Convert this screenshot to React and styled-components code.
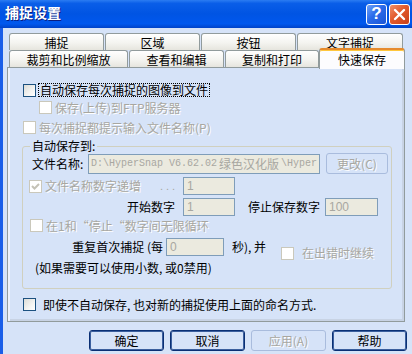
import React from 'react';
import styled, { createGlobalStyle } from 'styled-components';

const GlobalStyle = createGlobalStyle`
  html, body { margin: 0; padding: 0; background: #D6E3F8; }
  body {
    font-family: "Noto Sans CJK SC", "Liberation Sans", sans-serif;
    font-size: 12px;
    color: #000;
  }
`;

const Window = styled.div`
  width: 412px;
  height: 354px;
  overflow: hidden;
  display: flex;
  flex-direction: column;
  background: #D6E3F8;
`;

const TitleBar = styled.div`
  height: 28px;
  flex: none;
  display: flex;
  align-items: center;
  justify-content: space-between;
  padding: 0 2px 0 5px;
  background: linear-gradient(180deg, #2B7CF2 0%, #0A5EE8 12%, #0054E3 50%, #0058EE 85%, #0043C8 100%);
`;

const Title = styled.div`
  color: #fff;
  font-weight: bold;
  font-size: 14px;
  line-height: 16px;
  padding-bottom: 4px;
  text-shadow: 1px 1px 0 #0A1E80;
`;

const TitleButtons = styled.div`
  display: flex;
  gap: 2px;
`;

const TitleButton = styled.div`
  width: 21px;
  height: 21px;
  box-sizing: border-box;
  border: 1px solid #fff;
  border-radius: 3px;
  display: flex;
  align-items: center;
  justify-content: center;
  color: #fff;
  font-family: "Liberation Sans", sans-serif;
  font-weight: bold;
  font-size: 17px;
  background: ${p => p.$close
    ? 'linear-gradient(135deg, #F0906A 0%, #E25A2C 45%, #C8401A 100%)'
    : 'linear-gradient(135deg, #6FA2F8 0%, #2A6BEA 45%, #1A55D6 100%)'};
`;

const Body = styled.div`
  flex: 1;
  display: flex;
  flex-direction: column;
  border-left: 3px solid #1A5EE8;
  padding: 5px 0 0 4px;
`;

const TabRow = styled.div`
  display: flex;
  gap: 1px;
  padding-left: 2px;
  height: 17px;
  position: relative;
  z-index: ${p => (p.$front ? 2 : 1)};
`;

const Tab = styled.div`
  width: ${p => p.$w}px;
  height: 17px;
  flex: none;
  box-sizing: border-box;
  border: 1px solid #919B9C;
  border-bottom: none;
  border-radius: 3px 3px 0 0;
  background: linear-gradient(180deg, #FFFFFF 0%, #F4F4F0 55%, #E6E5DE 100%);
  display: flex;
  justify-content: center;
  padding-top: 2px;
  line-height: 14px;
`;

const ActiveTab = styled(Tab)`
  margin-left: -1px;
  margin-top: -2px;
  height: 21px;
  padding-top: 3px;
  background: #FCFCFE;
  border-top: 2px solid #E68B2C;
  box-shadow: inset 0 1px 0 #FFC73C;
  position: relative;
  z-index: 3;
`;

const Panel = styled.div`
  width: 398px;
  height: 255px;
  box-sizing: border-box;
  border: 1px solid #919B9C;
  background: #D6E3F8;
  box-shadow: inset 2px 0 0 #EEF3FC, inset -2px -2px 0 #C8D3E4;
  padding: 14px 0 0 15px;
  display: flex;
  flex-direction: column;
`;

const Row = styled.div`
  display: flex;
  align-items: center;
  margin-top: ${p => p.$mt || 0}px;
  padding-left: ${p => p.$pl || 0}px;
  height: ${p => p.$h || 14}px;
`;

const CheckItem = styled.div`
  display: flex;
  align-items: center;
  gap: ${p => (p.$gap != null ? p.$gap : 3)}px;
  width: ${p => (p.$w ? `${p.$w}px` : 'auto')};
  flex: none;
  align-self: ${p => (p.$low ? 'flex-start' : 'auto')};
  margin-top: ${p => (p.$low ? 8 : 0)}px;
  margin-left: ${p => p.$ml || 0}px;
`;

const Box = styled.span`
  width: 13px;
  height: 13px;
  flex: none;
  box-sizing: border-box;
  border: 1px solid ${p => (p.$disabled ? '#CAC8BB' : '#1C5180')};
  background: ${p => (p.$disabled ? '#FFFFFF' : 'linear-gradient(135deg, #DCDCD7 0%, #F4F4F2 60%, #FFFFFF 100%)')};
  display: flex;
  align-items: center;
  justify-content: center;
`;

const Text = styled.span`
  line-height: 14px;
  white-space: nowrap;
  color: ${p => (p.$disabled ? '#A8A7A1' : '#000')};
  text-shadow: ${p => (p.$disabled ? '1px 1px 0 #FFFFFF' : 'none')};
`;

const FocusText = styled(Text)`
  border: 1px dotted #000;
  padding: 0 1px;
  margin-left: -1px;
  line-height: 12px;
`;

const Label = styled(Text)`
  width: ${p => p.$w}px;
  flex: none;
  text-align: ${p => p.$align || 'left'};
  padding-right: ${p => p.$pr || 0}px;
  margin-left: ${p => p.$ml || 0}px;
  box-sizing: border-box;
`;

const Dots = styled.span`
  width: 23px;
  flex: none;
  color: #A8A7A1;
  letter-spacing: 3px;
  font-family: "Liberation Sans", sans-serif;
  font-size: 11px;
`;

const Input = styled.div`
  width: ${p => p.$w}px;
  height: ${p => p.$h || 18}px;
  flex: none;
  box-sizing: border-box;
  border: 1px solid #7F9DB9;
  background: #EBEADF;
  color: #A8A7A1;
  padding-left: ${p => (p.$mono ? 2 : 3)}px;
  margin-left: ${p => p.$ml || 0}px;
  display: flex;
  align-items: center;
  overflow: hidden;
  white-space: nowrap;
  font-family: ${p => (p.$mono
    ? '"Liberation Mono", "Noto Sans CJK SC", monospace'
    : '"Liberation Sans", sans-serif')};
  font-size: ${p => (p.$mono ? 10 : 12)}px;
`;

const Cjk = styled.span`
  font-family: "Noto Sans CJK SC", sans-serif;
  font-size: 12px;
  margin: 0 2px;
`;

const Group = styled.fieldset`
  margin: 5px 0 0 -1px;
  width: 370px;
  box-sizing: border-box;
  border: 1px solid #D0D0BF;
  border-radius: 3px;
  padding: 0 0 13px 0;
  display: flex;
  flex-direction: column;
`;

const Legend = styled.legend`
  margin-left: 7px;
  padding: 0 2px;
  line-height: 14px;
`;

const Button = styled.div`
  width: ${p => p.$w || 75}px;
  height: 21px;
  flex: none;
  box-sizing: border-box;
  border-radius: 3px;
  border: 1px solid ${p => (p.$disabled ? '#A9BCDD' : '#0A2F74')};
  box-shadow: ${p => (p.$disabled ? 'none' : 'inset 0 0 0 1px #3B5F9E')};
  background: #D6E3F8;
  display: flex;
  align-items: center;
  justify-content: center;
  margin-left: ${p => p.$ml || 0}px;
  color: ${p => (p.$disabled ? '#A8A7A1' : '#000')};
  text-shadow: ${p => (p.$disabled ? '1px 1px 0 #FFFFFF' : 'none')};
  line-height: 14px;
`;

const ButtonRow = styled.div`
  display: flex;
  gap: 6px;
  margin-top: 8px;
  padding-left: 82px;
`;

const Check = ({ disabled, checked }) => (
  <Box $disabled={disabled}>
    {checked && (
      <svg width="9" height="9" viewBox="0 0 9 9">
        <polyline points="1,4 3.5,6.5 8,2" fill="none" stroke={disabled ? '#C4C2B6' : '#21A121'} strokeWidth="2" />
      </svg>
    )}
  </Box>
);

export default function App() {
  return (
    <Window>
      <GlobalStyle />
      <TitleBar>
        <Title>捕捉设置</Title>
        <TitleButtons>
          <TitleButton>?</TitleButton>
          <TitleButton $close>
            <svg width="13" height="13" viewBox="0 0 13 13">
              <path d="M2 2 L11 11 M11 2 L2 11" stroke="#fff" strokeWidth="2.4" strokeLinecap="round" />
            </svg>
          </TitleButton>
        </TitleButtons>
      </TitleBar>

      <Body>
        <TabRow>
          <Tab $w={95}>捕捉</Tab>
          <Tab $w={95}>区域</Tab>
          <Tab $w={95}>按钮</Tab>
          <Tab $w={106}>文字捕捉</Tab>
        </TabRow>
        <TabRow $front>
          <Tab $w={119}>裁剪和比例缩放</Tab>
          <Tab $w={95}>查看和编辑</Tab>
          <Tab $w={94}>复制和打印</Tab>
          <ActiveTab $w={86}>快速保存</ActiveTab>
        </TabRow>

        <Panel>
          <Row $mt={1} $h={14}>
            <CheckItem $gap={3}>
              <Check />
              <FocusText>自动保存每次捕捉的图像到文件</FocusText>
            </CheckItem>
          </Row>
          <Row $mt={4} $pl={16} $h={13}>
            <CheckItem>
              <Check disabled />
              <Text $disabled>保存(上传)到FTP服务器</Text>
            </CheckItem>
          </Row>
          <Row $mt={7} $h={13}>
            <CheckItem>
              <Check disabled />
              <Text $disabled>每次捕捉都提示输入文件名称(P)</Text>
            </CheckItem>
          </Row>

          <Group>
            <Legend>自动保存到:</Legend>
            <Row $pl={9} $h={21}>
              <Label $w={56}>文件名称:</Label>
              <Input $w={232} $h={20} $mono>
                D:\HyperSnap V6.62.02<Cjk>绿色汉化版</Cjk>\Hyper
              </Input>
              <Button $w={62} $ml={6} $disabled>更改(C)</Button>
            </Row>
            <Row $mt={3} $pl={6} $h={18}>
              <CheckItem $w={131}>
                <Check disabled checked />
                <Text $disabled>文件名称数字递增</Text>
              </CheckItem>
              <Dots>...</Dots>
              <Input $w={52}>1</Input>
            </Row>
            <Row $mt={3} $pl={6} $h={18}>
              <Label $w={154} $align="right" $pr={8}>开始数字</Label>
              <Input $w={52}>1</Input>
              <Label $w={77} $ml={13}>停止保存数字</Label>
              <Input $w={53}>100</Input>
            </Row>
            <Row $mt={3} $pl={7} $h={13}>
              <CheckItem>
                <Check disabled />
                <Text $disabled>在1和“停止“数字间无限循环</Text>
              </CheckItem>
            </Row>
            <Row $mt={6} $pl={6} $h={18}>
              <Label $w={137} $align="right" $pr={3}>重复首次捕捉 (每</Label>
              <Input $w={58}>0</Input>
              <Label $w={49} $ml={8}>秒), 并</Label>
              <CheckItem $low $gap={8}>
                <Check disabled />
                <Text $disabled>在出错时继续</Text>
              </CheckItem>
            </Row>
            <Row $mt={5} $pl={12} $h={14}>
              <Text>(如果需要可以使用小数, 或0禁用)</Text>
            </Row>
          </Group>

          <Row $mt={9} $h={13}>
            <CheckItem $gap={7}>
              <Check />
              <Text>即使不自动保存, 也对新的捕捉使用上面的命名方式.</Text>
            </CheckItem>
          </Row>
        </Panel>

        <ButtonRow>
          <Button>确定</Button>
          <Button>取消</Button>
          <Button $disabled>应用(A)</Button>
          <Button>帮助</Button>
        </ButtonRow>
      </Body>
    </Window>
  );
}
